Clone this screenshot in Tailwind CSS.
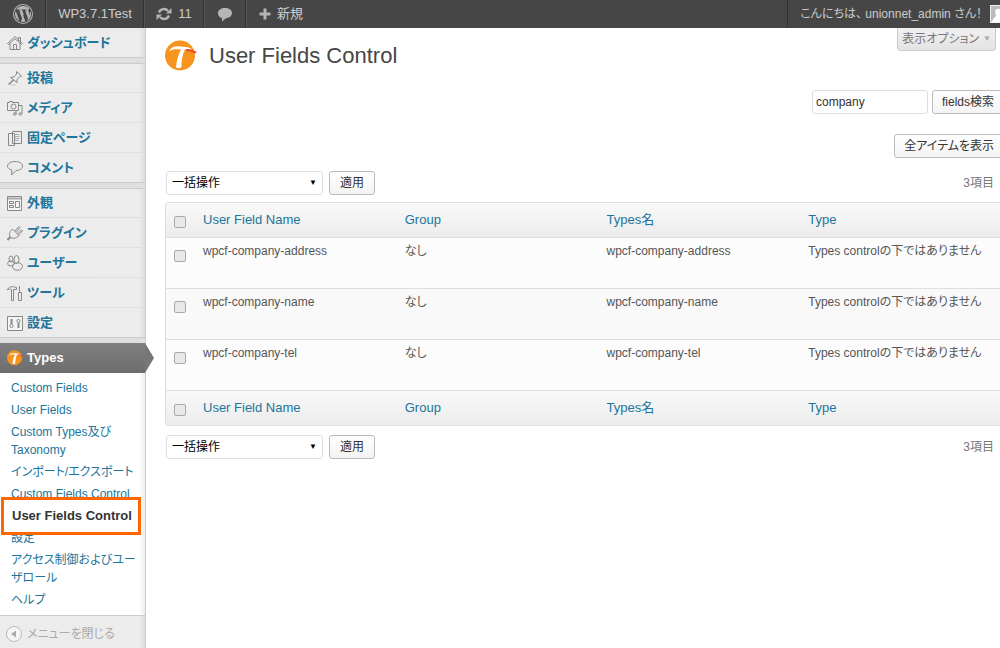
<!DOCTYPE html>
<html lang="ja">
<head>
<meta charset="utf-8">
<title>User Fields Control</title>
<script src="https://cdn.jsdelivr.net/npm/@tailwindcss/browser@4"></script>
</head>
<body class="min-h-screen flex flex-col overflow-x-hidden bg-white text-xs text-[#555] font-['Liberation_Sans','Noto_Sans_CJK_JP',sans-serif] [font-feature-settings:'palt']">

<svg class="hidden">
  <linearGradient id="steel" x1="0" y1="0" x2="0" y2="1"><stop offset="0" stop-color="#fafafa"/><stop offset="1" stop-color="#c8c8c8"/></linearGradient>
  <symbol id="types" viewBox="0 0 32 32">
    <circle cx="15" cy="15.500" r="15" fill="#f7941e"/>
    <path d="M4 11.500C6 6.500 11 6 16 6.500c5 .5 8 .5 11 3l-1 1.500c-2-1-3.500-1.500-6-1.500-3 6-3.500 12-3.500 17.500-1.500 1.500-3.500 1.500-5.500.5C11.500 21 13 15 16 9.500 11 9 7 9 4 11.500z" fill="#fff"/>
    <path d="M21 9c5-.5 7 1 11 3l-2 1.500C26 12 25 11 21 11z" fill="#f04e23"/>
  </symbol>
</svg>

<header class="flex h-7 shrink-0 items-stretch bg-[#464646] text-[13px] text-[#ccc]">
  <a href="#" aria-label="WordPress" class="flex w-[46px] items-center justify-center border-r border-[#333]">
    <svg class="size-5" viewBox="0 0 20 20" fill="#b5b5b5"><path fill-rule="evenodd" d="M10 0a10 10 0 1 0 0 20 10 10 0 0 0 0-20zm0 1a9 9 0 1 1 0 18 9 9 0 0 1 0-18z"/><path d="M10 2a8 8 0 0 0-6.700 3.600h2.900l1 .1v.5l-1 .2 3 8.600 1.500-4.600-1.300-4-.9-.2v-.6h4.900v.6l-1.200.2 2.900 8.500.8-2.700c.8-2.500.4-3.300-.2-4.500-.6-1-.7-2.700 1-3.200A8 8 0 0 0 10 2zM2.700 6.800a8 8 0 0 0 3.800 10.400zM17.200 6.500c.2 1.500-.2 3-.7 4.400L14 17A8 8 0 0 0 17.200 6.500zM10.100 11.200 7.900 17.700a8 8 0 0 0 4.600-.1z"/></svg>
  </a>
  <a href="#" class="flex w-[98px] items-center justify-center border-x border-l-[#555] border-r-[#333]">WP3.7.1Test</a>
  <a href="#" class="flex w-[60px] items-center justify-center gap-1.5 border-x border-l-[#555] border-r-[#333]">
    <svg class="size-4" viewBox="0 0 16 16" fill="none" stroke="#b5b5b5" stroke-width="2.400"><path d="M3 6.500A5.200 5.200 0 0 1 12 5M13 9.500A5.200 5.200 0 0 1 4 11"/><path d="M15.500 2v5.500H10zM.5 14V8.500H6z" fill="#b5b5b5" stroke="none"/></svg>11</a>
  <a href="#" aria-label="コメント" class="flex w-[42px] items-center justify-center border-x border-l-[#555] border-r-[#333]">
    <svg class="size-4" viewBox="0 0 16 16" fill="#b5b5b5"><path d="M8 2c4 0 7 2 7 5s-3 5.200-6 5.200L5 15.500V12C2.500 11.500 1 9.500 1 7.200 1 4 4 2 8 2z"/></svg>
  </a>
  <a href="#" class="flex items-center gap-1.5 border-l border-[#555] px-3">
    <svg class="size-3" viewBox="0 0 12 12" fill="#b5b5b5"><path d="M4.500 0.500h3v4h4v3h-4v4h-3v-4h-4v-3h4z"/></svg>新規</a>
  <a href="#" class="ml-auto flex items-center gap-2 overflow-hidden border-l border-[#333] pl-3 text-xs whitespace-nowrap">こんにちは、 unionnet_admin さん！
    <svg class="h-[18px] w-[10px]" viewBox="0 0 10 18"><path fill="#bbb" d="M0 0h10v18H0z"/><path fill="#eee" d="M0 0h10v1H1v16h9v1H0z"/><path fill="#fff" d="M10 4C6 3 4 6 6 10c0 2-3 3-4 7h8z"/></svg>
  </a>
</header>

<div class="flex grow">
  <nav class="flex w-[146px] shrink-0 flex-col border-r border-[#ccc] bg-linear-to-r from-[#ececec] from-96% to-[#dcdcdc] text-[13px] font-bold text-[#21759b]">
    <a href="#" class="flex h-[30px] items-center gap-1 border-b border-[#ccc] pl-[7px]"><svg class="size-4" viewBox="0 0 16 16" fill="url(#steel)" stroke="#888"><path d="M11.500 6V2.500h2V8M3 8v6.500h10V8M6.500 14.500v-5h3v5"/><path d="m.5 8.500 7.500-7 7.500 7-1 1L8 3.800 1.500 9.500z"/></svg>ダッシュボード</a>
    <div class="h-[5px] bg-[#dfdfdf]"></div>
    <a href="#" class="flex h-[30px] items-center gap-1 border-y border-t-[#ccc] border-b-[#dfdfdf] pl-[7px]"><svg class="size-4" viewBox="0 0 16 16" fill="url(#steel)" stroke="#888"><path d="M6.500 10 1.500 14.500" stroke-width="1.500"/><path d="m9.500 1.500 5 4.500-2 1-2.500 2.500v3L3.500 7.500l3.500-.5L9.500 4z"/><path d="M3 15h6" stroke="#ccc"/></svg>投稿</a>
    <a href="#" class="flex h-[30px] items-center gap-1 border-b border-[#dfdfdf] pl-[7px]"><svg class="size-4" viewBox="0 0 16 16" fill="url(#steel)" stroke="#888"><path d="M.5 2.500h2v-1h3v1h6v8H.5z"/><circle cx="6.500" cy="6.500" r="2.500"/><path d="M9 14V11M12 5.500h3V14" fill="none"/><circle cx="7.800" cy="14" r="1.300"/><circle cx="13.300" cy="14" r="1.300"/></svg>メディア</a>
    <a href="#" class="flex h-[30px] items-center gap-1 border-b border-[#dfdfdf] pl-[7px]"><svg class="size-4" viewBox="0 0 16 16" fill="url(#steel)" stroke="#888"><path d="M1.500 3.500h6v12h-6z"/><path d="M5.500 1.500h9v12h-9z"/><path d="M7.500 4.500h5M7.500 6.500h5M7.500 8.500h5M7.500 10.500h4" stroke="#aaa"/></svg>固定ページ</a>
    <a href="#" class="flex h-[30px] items-center gap-1 border-b border-[#ccc] pl-[7px]"><svg class="size-4" viewBox="0 0 16 16" fill="url(#steel)" stroke="#888"><path d="M8 1.500c4 0 7.500 1.800 7.500 4.500S12.500 10.500 9 10.500L4.500 15l.5-5C2.500 9.500.5 8 .5 6 .5 3.500 4 1.500 8 1.500z"/></svg>コメント</a>
    <div class="h-[5px] bg-[#dfdfdf]"></div>
    <a href="#" class="flex h-[30px] items-center gap-1 border-y border-t-[#ccc] border-b-[#dfdfdf] pl-[7px]"><svg class="size-4" viewBox="0 0 16 16" fill="#f5f5f5" stroke="#888"><path d="M.5 1.500h14v14H.5z"/><path d="M1 3.500h13" stroke-width="2" stroke="#aaa"/><path d="M2.500 6.500h4v2h-4zM2.500 10.500h4v2h-4zM8.500 6.500h4v6h-4z"/></svg>外観</a>
    <a href="#" class="flex h-[30px] items-center gap-1 border-b border-[#dfdfdf] pl-[7px]"><svg class="size-4" viewBox="0 0 16 16" fill="url(#steel)" stroke="#888"><path d="M3.500 12 .5 15" stroke-width="2"/><path d="M8 6 12 1.500l1 1L9.500 7M10 9l4.500-4 1 1L11 10.500"/><path d="m5.500 4 6.500 6.500c-3 3.500-7 3-8.500 2C2 11 2 7 5.500 4z"/></svg>プラグイン</a>
    <a href="#" class="flex h-[30px] items-center gap-1 border-b border-[#dfdfdf] pl-[7px]"><svg class="size-4" viewBox="0 0 16 16" fill="url(#steel)" stroke="#888"><ellipse cx="4" cy="4" rx="2" ry="3"/><ellipse cx="3.800" cy="8.500" rx="3.200" ry="2.500"/><ellipse cx="9.500" cy="4.500" rx="2.500" ry="4"/><ellipse cx="10.500" cy="11.500" rx="5" ry="3.800"/></svg>ユーザー</a>
    <a href="#" class="flex h-[30px] items-center gap-1 border-b border-[#dfdfdf] pl-[7px]"><svg class="size-4" viewBox="0 0 16 16" fill="url(#steel)" stroke="#888"><path d="M.5 5C1.500 1.500 5 1 9.500 2.500v2H6.500v11h-2v-11C3 4 1.500 4 .5 5zM12.500 1v6"/><path d="M11.500 7.500h3v8h-3z"/></svg>ツール</a>
    <a href="#" class="flex h-[30px] items-center gap-1 border-b border-[#ccc] pl-[7px]"><svg class="size-4" viewBox="0 0 16 16" fill="#f5f5f5" stroke="#888"><path d="M.5 1.500h15v14H.5z"/><path d="M4.500 4v5M11.500 8v5" stroke-width="2"/><circle cx="4.500" cy="11" r="1.600"/><circle cx="11.500" cy="6" r="1.600"/></svg>設定</a>
    <div class="h-[5px] bg-[#dfdfdf]"></div>
    <a href="#" class="relative flex h-[30px] items-center gap-1 bg-linear-to-b from-[#808080] to-[#6d6d6d] pl-[7px] text-white"><svg class="size-4"><use href="#types"/></svg>Types
      <svg class="absolute left-[145px] top-0 h-[30px] w-[9px]" viewBox="0 0 9 30"><path fill="#777" d="M0 0 9 15 0 30z"/></svg>
    </a>
    <ul class="bg-linear-to-r from-white from-96% to-[#ececec] py-1 text-xs/[18px] font-normal">
      <li><a href="#" class="block py-[2px] pl-[11px]">Custom Fields</a></li>
      <li><a href="#" class="block py-[2px] pl-[11px]">User Fields</a></li>
      <li><a href="#" class="block py-[2px] pl-[11px]">Custom Types及び<br>Taxonomy</a></li>
      <li><a href="#" class="block py-[2px] pl-[11px]">インポート/エクスポート</a></li>
      <li><a href="#" class="block py-[2px] pl-[11px]">Custom Fields Control</a></li>
      <li class="relative"><a href="#" class="block py-[2px] pl-[11px] text-[13px] font-bold text-[#333]"><span class="absolute -inset-y-2 left-px right-1 flex items-center whitespace-nowrap border-[3px] border-[#ff6600] bg-white pl-2">User Fields Control</span>&nbsp;</a></li>
      <li><a href="#" class="block py-[2px] pl-[11px]">設定</a></li>
      <li><a href="#" class="block py-[2px] pl-[11px]">アクセス制御およびユー<br>ザロール</a></li>
      <li><a href="#" class="block py-[2px] pl-[11px]">ヘルプ</a></li>
    </ul>
    <button class="flex h-9 items-center gap-[5px] border-t border-[#ccc] pl-[6px] text-xs font-normal text-[#aaa]"><svg class="size-4" viewBox="0 0 16 16"><circle cx="8" cy="8" r="7.500" fill="#f5f5f5" stroke="#bbb"/><path fill="#aaa" d="M10 4.500v7L5 8z"/></svg>メニューを閉じる</button>
  </nav>

  <main class="-mr-1 min-w-0 grow pl-[19px]">
    <div class="flex items-start justify-between">
      <h1 class="flex items-center gap-3 pt-2.5 text-[22px]/9 text-[#464646]"><svg class="size-8"><use href="#types"/></svg>User Fields Control</h1>
      <button class="mr-2 flex h-[23px] items-center gap-1 rounded-b border border-t-0 border-[#ccc] bg-linear-to-b from-[#f1f1f1] to-[#e3e3e3] px-1 text-xs text-[#777]">表示オプション <span class="text-[8px] text-[#aaa]">▼</span></button>
    </div>
    <form class="mt-4 flex justify-end gap-1">
      <input type="text" aria-label="fields検索" value="company" class="h-6 w-[116px] rounded-[3px] border border-[#dfdfdf] px-[3px] text-[#333]">
      <button type="button" class="h-6 rounded-[3px] border border-[#bbb] bg-linear-to-b from-[#fefefe] to-[#f4f4f4] px-[9px] text-[#333]">fields検索</button>
    </form>
    <div class="mt-5 flex justify-end">
      <button class="h-6 rounded-[3px] border border-[#bbb] bg-linear-to-b from-[#fefefe] to-[#f4f4f4] px-[9px] text-[#333]">全アイテムを表示</button>
    </div>
    <div class="mt-[13px] flex items-center gap-1.5 pl-px">
      <span class="relative"><select aria-label="一括操作" class="h-6 w-[157px] appearance-none rounded-[3px] border border-[#dfdfdf] bg-white pl-[5px] text-black"><option>一括操作</option></select><span class="pointer-events-none absolute right-[6px] top-1 text-[8px]/4 text-black">▼</span></span>
      <button class="h-6 rounded-[3px] border border-[#bbb] bg-linear-to-b from-[#fefefe] to-[#f4f4f4] px-2.5 text-[#333]">適用</button>
      <span class="ml-auto pr-2.5 text-[#777]">3項目</span>
    </div>
    <div class="my-[7px] overflow-hidden rounded-[3px] border border-[#dfdfdf]">
      <table class="w-full table-fixed text-left">
        <colgroup><col class="w-[30px]"><col><col><col><col></colgroup>
        <thead class="bg-linear-to-b from-[#f9f9f9] to-[#ececec] text-[13px] text-[#21759b]">
          <tr class="h-[34px] border-b border-[#dfdfdf]"><th class="pl-2 pt-1"><input type="checkbox" aria-label="すべて選択" class="block size-3 appearance-none rounded-[2px] border border-[#aaa] bg-[#e8e8e8]"></th><th class="pl-[7px] font-normal"><a href="#">User Field Name</a></th><th class="pl-[7px] font-normal"><a href="#">Group</a></th><th class="pl-[7px] font-normal"><a href="#">Types名</a></th><th class="pl-[7px] font-normal"><a href="#">Type</a></th></tr>
        </thead>
        <tbody class="align-top">
          <tr class="h-[51px] border-b border-[#dfdfdf] bg-[#fcfcfc]"><td class="pl-2 pt-3"><input type="checkbox" aria-label="wpcf-company-address" class="block size-3 appearance-none rounded-[2px] border border-[#aaa] bg-[#e8e8e8]"></td><td class="pl-[7px] pt-[5px]">wpcf-company-address</td><td class="pl-[7px] pt-[5px]">なし</td><td class="pl-[7px] pt-[5px]">wpcf-company-address</td><td class="whitespace-nowrap pl-[7px] pt-[5px]">Types controlの下ではありません</td></tr>
          <tr class="h-[51px] border-b border-[#dfdfdf] bg-[#f9f9f9]"><td class="pl-2 pt-3"><input type="checkbox" aria-label="wpcf-company-name" class="block size-3 appearance-none rounded-[2px] border border-[#aaa] bg-[#e8e8e8]"></td><td class="pl-[7px] pt-[5px]">wpcf-company-name</td><td class="pl-[7px] pt-[5px]">なし</td><td class="pl-[7px] pt-[5px]">wpcf-company-name</td><td class="whitespace-nowrap pl-[7px] pt-[5px]">Types controlの下ではありません</td></tr>
          <tr class="h-[51px] border-b border-[#dfdfdf] bg-[#fcfcfc]"><td class="pl-2 pt-3"><input type="checkbox" aria-label="wpcf-company-tel" class="block size-3 appearance-none rounded-[2px] border border-[#aaa] bg-[#e8e8e8]"></td><td class="pl-[7px] pt-[5px]">wpcf-company-tel</td><td class="pl-[7px] pt-[5px]">なし</td><td class="pl-[7px] pt-[5px]">wpcf-company-tel</td><td class="whitespace-nowrap pl-[7px] pt-[5px]">Types controlの下ではありません</td></tr>
        </tbody>
        <tfoot class="bg-linear-to-b from-[#f9f9f9] to-[#ececec] text-[13px] text-[#21759b]">
          <tr class="h-[35px]"><th class="pl-2 pt-1"><input type="checkbox" aria-label="すべて選択" class="block size-3 appearance-none rounded-[2px] border border-[#aaa] bg-[#e8e8e8]"></th><th class="pl-[7px] font-normal"><a href="#">User Field Name</a></th><th class="pl-[7px] font-normal"><a href="#">Group</a></th><th class="pl-[7px] font-normal"><a href="#">Types名</a></th><th class="pl-[7px] font-normal"><a href="#">Type</a></th></tr>
        </tfoot>
      </table>
    </div>
    <div class="mt-[9px] flex items-center gap-1.5 pl-px">
      <span class="relative"><select aria-label="一括操作" class="h-6 w-[157px] appearance-none rounded-[3px] border border-[#dfdfdf] bg-white pl-[5px] text-black"><option>一括操作</option></select><span class="pointer-events-none absolute right-[6px] top-1 text-[8px]/4 text-black">▼</span></span>
      <button class="h-6 rounded-[3px] border border-[#bbb] bg-linear-to-b from-[#fefefe] to-[#f4f4f4] px-2.5 text-[#333]">適用</button>
      <span class="ml-auto pr-2.5 text-[#777]">3項目</span>
    </div>
  </main>
</div>
</body>
</html>
